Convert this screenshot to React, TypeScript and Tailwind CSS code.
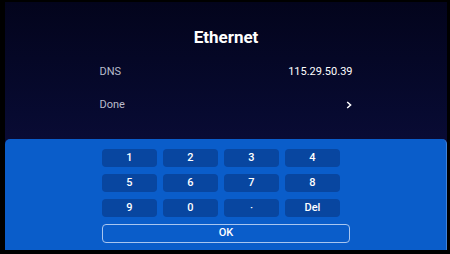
import React from 'react'

const KEYS = ['1', '2', '3', '4', '5', '6', '7', '8', '9', '0', '·', 'Del']

export default function App() {
  return (
    <div className="w-[450px] h-[254px] bg-black pl-[5px] pt-[2px] pr-[3px] pb-[4px] font-['Roboto',sans-serif]">
      <div className="h-full flex flex-col bg-[linear-gradient(to_bottom,#03041c_0%,#070a30_45%,#150f46_100%)]">
        {/* Title */}
        <div className="h-[58px] flex items-end justify-center pb-[14px]">
          <span className="text-[17px] font-bold text-white leading-none">Ethernet</span>
        </div>

        {/* Rows */}
        <div className="mx-auto w-[253px] flex flex-col">
          <div className="h-[25px] flex items-center justify-between text-[11px]">
            <span className="text-[#b9bccb]">DNS</span>
            <span className="text-white">115.29.50.39</span>
          </div>
          <div className="h-[32px] flex items-center justify-between text-[11px] mt-[4px]">
            <span className="text-[#b9bccb]">Done</span>
            <svg width="6" height="8" viewBox="0 0 6 8" className="mr-[1px]">
              <polyline points="1.2,1 4.6,4 1.2,7" fill="none" stroke="white" strokeWidth="1.5" />
            </svg>
          </div>
        </div>

        {/* Keypad panel */}
        <div className="mt-auto h-[111px] bg-[#0a5dca] rounded-t-[5px] border-r border-[#3f82dc] pt-[10px] pl-[97px]">
          <div className="grid grid-cols-[repeat(4,55px)] gap-x-[6px] gap-y-[7px]">
            {KEYS.map(k => (
              <div
                key={k}
                className="h-[18px] rounded-[4px] bg-[#0846a0] flex items-center justify-center text-[11px] font-medium text-white"
              >
                {k}
              </div>
            ))}
          </div>
          <div className="mt-[7px] w-[248px] h-[19px] rounded-[4px] border border-[#a9c6f0] flex items-center justify-center text-[11px] font-medium text-white">
            OK
          </div>
        </div>
      </div>
    </div>
  )
}
